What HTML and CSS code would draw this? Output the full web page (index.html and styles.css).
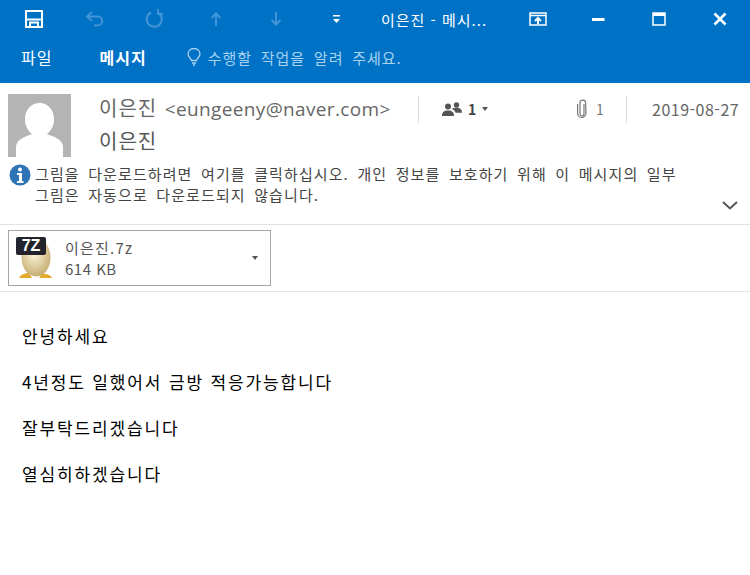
FILE: index.html
```html
<!DOCTYPE html>
<html lang="ko">
<head>
  <meta charset="UTF-8" />
  <meta name="viewport" content="width=device-width, initial-scale=1.0"/>
  <title>이은진 - 메시지</title>
  <link rel="stylesheet" href="styles.css">
</head>
<body>
  <header class="ribbon">
    <div class="titlebar">
      <span class="tool">
        <svg width="18" height="18" viewBox="0 0 18 18" fill="none" stroke="#fff" stroke-width="2"><path d="M1 1h16v16H1z"/><path d="M1 9.500h16M5 17v-4.500h8V17" /><path d="M4 4.500h10" stroke="#0072c6"/></svg>
      </span>
      <span class="tool">
        <svg width="20" height="18" viewBox="0 0 20 18" fill="none" stroke="#4394d6" stroke-width="2"><path d="M7 2L2 6.500l5 4.500M2.500 6.500H12c7 0 7 9 0 9H9"/></svg>
      </span>
      <span class="tool">
        <svg width="20" height="20" viewBox="0 0 20 20" fill="none" stroke="#4394d6" stroke-width="2"><path d="M12.500 3.500A7.500 7.500 0 1 1 6 3.500M13 0v5h5"/></svg>
      </span>
      <span class="tool">
        <svg width="12" height="14" viewBox="0 0 12 14" fill="none" stroke="#4394d6" stroke-width="2"><path d="M1.500 6L6 1.500 10.500 6M6 2v12"/></svg>
      </span>
      <span class="tool">
        <svg width="12" height="14" viewBox="0 0 12 14" fill="none" stroke="#4394d6" stroke-width="2"><path d="M1.500 8L6 12.500 10.500 8M6 12V0"/></svg>
      </span>
      <span class="tool">
        <svg width="7" height="9" viewBox="0 0 7 9" fill="#fff"><path d="M0 0h7v1.500H0zM0 4h7L3.500 8z"/></svg>
      </span>
      <span class="window-title">이은진 - 메시...</span>
      <div class="window-buttons">
        <span class="tool">
          <svg width="18" height="14" viewBox="0 0 18 14" fill="none" stroke="#fff" stroke-width="1.500"><path d="M1 1h16v12H1zM1 3.500h16"/><path d="M9 12V6M6 9l3-3 3 3" stroke-width="2"/></svg>
        </span>
        <span class="tool">
          <svg width="14" height="3" viewBox="0 0 14 3" fill="#fff"><path d="M0 0h12.500v3H0z"/></svg>
        </span>
        <span class="tool">
          <svg width="14" height="14" viewBox="0 0 14 14" fill="none" stroke="#fff" stroke-width="1.500"><path d="M1 1h12v12H1z"/><path d="M1 2.500h12" stroke-width="3"/></svg>
        </span>
        <span class="tool">
          <svg width="14" height="14" viewBox="0 0 14 14" fill="none" stroke="#fff" stroke-width="2.600"><path d="M1.500 1.500l11 11M12.500 1.500l-11 11"/></svg>
        </span>
      </div>
    </div>
    <nav class="tabs">
      <a class="tab tab-file">파일</a>
      <a class="tab tab-message">메시지</a>
      <span class="tell-me">
        <svg width="14" height="18" viewBox="0 0 14 18" fill="none" stroke="#a9d2f0" stroke-width="1.300"><path d="M4.500 12.500C4 10 1 9 1 6a6 5.500 0 0 1 12 0c0 3-3 4-3.500 6.500zM5 15h4M6 17h2"/></svg>
        <span>수행할 작업을 알려 주세요.</span>
      </span>
    </nav>
  </header>

  <section class="msg-head">
    <div class="sender-row">
      <div class="avatar">
        <svg width="63" height="63" viewBox="0 0 63 63"><rect width="63" height="63" fill="#b4b4b4"/><path d="M8 63V53c0-7 8-10 16-13-5-4-7-9-7-15 0-9 6-16 14.500-16S46 16 46 25c0 6-2 11-7 15 8 3 16 6 16 13v10z" fill="#fff"/></svg>
      </div>
      <div class="sender-info">
        <div class="from-line">
          <span class="from">이은진 <span class="from-mail">&lt;eungeeny@naver.com&gt;</span></span>
          <span class="people">
            <svg width="20" height="14" viewBox="0 0 20 14" fill="#555"><circle cx="6" cy="4.500" r="3"/><circle cx="14.500" cy="3" r="2.700"/><path d="M0 14c0-4 2-5.500 6-5.500s6 1.500 6 5.500zM10 7c1-1 2.500-1.200 4.500-1.200 3.500 0 5.500 1.500 5.500 5h-6.500C13 9 12 8 10 7z"/></svg>
            <b>1</b>
            <i class="caret"></i>
          </span>
          <span class="clip">
            <svg width="12" height="22" viewBox="0 0 12 20" fill="none" stroke="#777" stroke-width="1.200"><path d="M8 5v10a2 2 0 0 1-4 0V4a2.800 2.800 0 0 1 5.600-.2L10 14a4.200 4.500 0 0 1-8.400 0V5"/></svg>
            1
          </span>
          <span class="date">2019-08-27</span>
        </div>
        <div class="to-line">이은진</div>
      </div>
    </div>
    <div class="notice">
      <svg class="info-icon" width="22" height="22" viewBox="0 0 22 22"><circle cx="11" cy="11" r="10.500" fill="#2f75b5"/><circle cx="11" cy="5.500" r="2" fill="#fff"/><path d="M8 9h5v8h1.500v2h-6.500v-2H10v-6H8z" fill="#fff"/></svg>
      <p>그림을 다운로드하려면 여기를 클릭하십시오. 개인 정보를 보호하기 위해 이 메시지의 일부<br>그림은 자동으로 다운로드되지 않습니다.</p>
      <svg class="chevron" width="16" height="9" viewBox="0 0 16 9" fill="none" stroke="#555" stroke-width="2"><path d="M1 1l7 6.500L15 1"/></svg>
    </div>
  </section>

  <section class="attachments">
    <div class="attachment">
      <div class="archive-icon">
        <svg width="40" height="42" viewBox="0 0 40 42">
          <defs>
            <radialGradient id="egg" cx="45%" cy="40%" r="70%"><stop offset="0" stop-color="#fff6dc"/><stop offset="1" stop-color="#bda262"/></radialGradient>
          </defs>
          <path d="M3 41c1-3 6-5 10-5l3 5zM36 41c-1-3-6-4-10-5l-3 5z" fill="#e5a92c"/>
          <ellipse cx="20" cy="20.500" rx="14.500" ry="19" fill="url(#egg)"/>
          <rect x="0" y="0" width="30" height="18" rx="2" fill="#23242b"/>
        </svg>
        <span class="archive-label">7Z</span>
      </div>
      <div class="attachment-text">
        <span class="attachment-name">이은진.7z</span>
        <span>614 KB</span>
      </div>
      <i class="caret"></i>
    </div>
  </section>

  <main class="body-text">
    <p>안녕하세요</p>
    <p>4년정도 일했어서 금방 적응가능합니다</p>
    <p>잘부탁드리겠습니다</p>
    <p>열심히하겠습니다</p>
  </main>
</body>
</html>
```

FILE: styles.css
```css
* {
  box-sizing: border-box;
}
body {
  margin: 0;
  background: #fff;
  font-family: "Noto Sans CJK KR", "Noto Sans", sans-serif;
  color: #444;
  overflow: hidden;
}
.ribbon {
  height: 83px;
  background-color: #0072c6;
  color: #fff;
}
.titlebar {
  height: 38px;
  display: flex;
  align-items: center;
  padding-left: 4px;
}
.tool {
  width: 60.5px;
  height: 38px;
  display: flex;
  align-items: center;
  justify-content: center;
  flex: none;
}
.window-title {
  font-size: 15px;
  letter-spacing: 1px;
  margin-left: 14px;
  white-space: nowrap;
}
.window-buttons {
  margin-left: auto;
  display: flex;
}
.tabs {
  height: 45px;
  display: flex;
  align-items: center;
  font-size: 16px;
  letter-spacing: 1px;
  padding-bottom: 7px;
}
.tab-file {
  margin-left: 21px;
}
.tab-message {
  margin-left: 47px;
  font-weight: 700;
}
.tell-me {
  margin-left: 40px;
  color: #a9d2f0;
  display: flex;
  align-items: center;
  gap: 7px;
  font-size: 15px;
  letter-spacing: 1px;
  word-spacing: 3.500px;
}

.msg-head {
  padding: 11px 8px 0;
  height: 142px;
  border-bottom: 1px solid #e3e3e3;
}
.sender-row {
  display: flex;
  height: 63px;
}
.avatar {
  width: 63px;
  height: 63px;
  flex: none;
}
.avatar svg {
  display: block;
}
.sender-info {
  margin-left: 28px;
  flex: 1;
}
.from-line {
  display: flex;
  align-items: center;
  height: 30px;
  color: #666;
}
.from {
  width: 319px;
  margin-top: -4px;
  font-size: 20px;
  letter-spacing: 1px;
  white-space: nowrap;
}
.from-mail {
  margin-left: 1px;
  font-family: "Open Sans", sans-serif;
  font-size: 19px;
  letter-spacing: 0.35px;
}
.people {
  border-left: 1px solid #ddd;
  height: 27px;
  width: 158px;
  padding-left: 23px;
  display: flex;
  align-items: center;
  gap: 6px;
  font-size: 14px;
  color: #444;
}
.caret {
  display: inline-block;
  width: 0;
  height: 0;
  border-left: 3.5px solid transparent;
  border-right: 3.5px solid transparent;
  border-top: 4px solid #555;
}
.clip {
  width: 51px;
  height: 27px;
  border-right: 1px solid #ddd;
  display: flex;
  align-items: center;
  gap: 8px;
  font-size: 14px;
  color: #777;
}
.date {
  margin-left: 25px;
  font-size: 16px;
  letter-spacing: 0.5px;
  white-space: nowrap;
}
.to-line {
  font-size: 20px;
  letter-spacing: 1px;
  color: #555;
  margin-top: 2px;
}
.notice {
  position: relative;
  display: flex;
  align-items: flex-start;
  margin-top: 7px;
  padding-left: 1px;
}
.info-icon {
  flex: none;
}
.notice p {
  margin: -1px 0 0 4px;
  font-size: 15px;
  letter-spacing: 1.1px;
  word-spacing: 3.2px;
  line-height: 21px;
  color: #444;
  white-space: nowrap;
}
.chevron {
  position: absolute;
  right: 4px;
  top: 37px;
}

.attachments {
  padding: 5px 8px 5px;
  height: 67px;
  border-bottom: 1px solid #e3e3e3;
}
.attachment {
  width: 263px;
  height: 56px;
  border: 1px solid #a6a6a6;
  display: flex;
  align-items: center;
  padding-left: 7px;
}
.archive-icon {
  position: relative;
  width: 40px;
  height: 42px;
  flex: none;
}
.archive-icon svg {
  display: block;
}
.archive-label {
  position: absolute;
  left: 0;
  top: 0;
  width: 30px;
  text-align: center;
  color: #fff;
  font: 700 16px/18px "Liberation Sans", sans-serif;
}
.attachment-text {
  margin-left: 9px;
  width: 187px;
  display: flex;
  flex-direction: column;
  font-size: 15px;
  letter-spacing: 0.5px;
  line-height: 21px;
  color: #555;
}
.attachment-name {
  letter-spacing: 1.2px;
}
.body-text {
  padding: 31px 22px 0;
  color: #000;
  font-size: 17px;
  letter-spacing: 1.85px;
}
.body-text p {
  margin: 0 0 20px;
  line-height: 26px;
}
```
